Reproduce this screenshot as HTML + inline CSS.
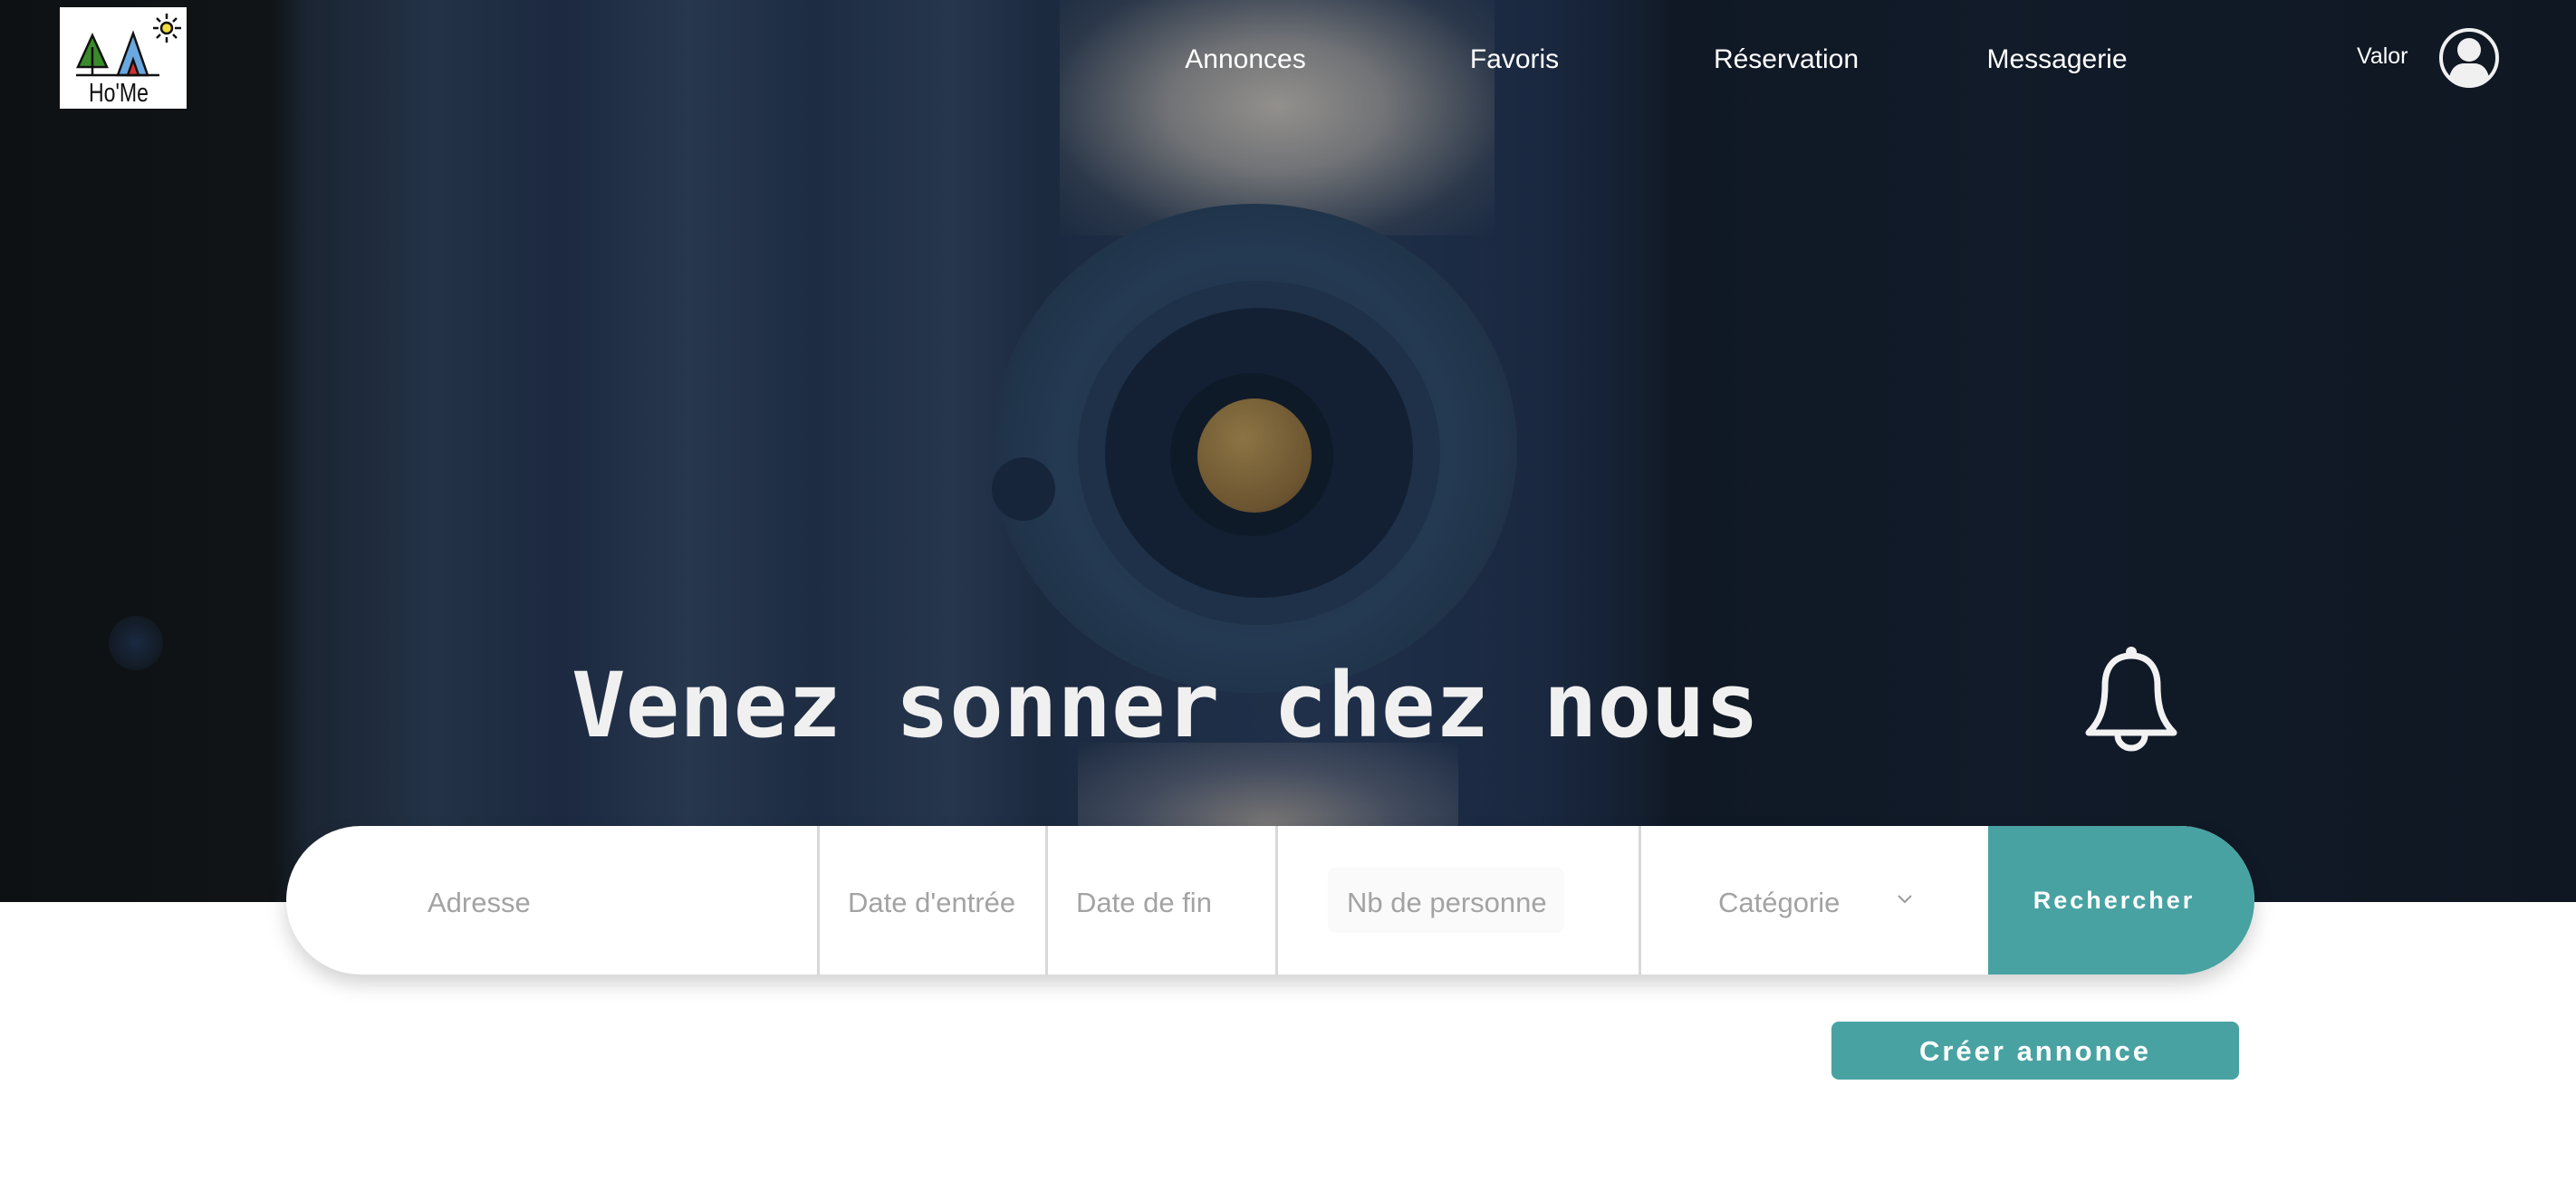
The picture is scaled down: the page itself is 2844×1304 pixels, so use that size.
<!DOCTYPE html>
<html><head><meta charset="utf-8">
<style>
*{margin:0;padding:0;box-sizing:border-box}
body{width:2844px;height:1304px;overflow:hidden;background:#fff;font-family:"Liberation Sans",sans-serif;position:relative}
.hero{position:absolute;left:0;top:0;width:2844px;height:996px;overflow:hidden;
background:linear-gradient(90deg,#0e1113 0,#101417 300px,#1b2533 340px,#233246 480px,#1c2940 620px,#27374e 760px,#1d2c42 900px,#26364d 1050px,#1c2a40 1150px,#20304a 1450px,#1a2840 1700px,#141f30 1810px,#0f1824 1850px,#111b29 2200px,#0f1722 2844px)}
.abs{position:absolute}
.nav{position:absolute;top:49px;color:#fff;font-size:30px;transform:translateX(-50%);white-space:nowrap}
.sep{position:absolute;top:0;width:3px;height:164px;background:#d8d8d8}
.ph{position:absolute;top:67px;font-size:31px;color:#a3a3a3;white-space:nowrap}
</style></head><body>
<div class="hero">
  <div class="abs" style="left:1170px;top:0;width:480px;height:260px;background:radial-gradient(ellipse at 50% 45%,#b9b0a3 0,#8d8a86 35%,#2f3b4c 75%,transparent 100%);opacity:.75"></div>
  <div class="abs" style="left:1190px;top:820px;width:420px;height:180px;background:radial-gradient(ellipse at 50% 50%,#8e8780 0,#4a5262 50%,transparent 100%);opacity:.8"></div>
  <div class="abs" style="left:1095px;top:225px;width:580px;height:540px;border-radius:50%;background:radial-gradient(circle,#1f2f42 0,#243a52 55%,#1a2a3e 90%,transparent 100%)"></div>
  <div class="abs" style="left:1190px;top:310px;width:400px;height:380px;border-radius:50%;background:#132033;border:30px solid #1e3148"></div>
  <div class="abs" style="left:1292px;top:412px;width:180px;height:180px;border-radius:50%;background:#0f1a28"></div>
  <div class="abs" style="left:1322px;top:440px;width:126px;height:126px;border-radius:50%;background:radial-gradient(circle at 40% 35%,#8c7444,#6b5430 70%,#4a3a22)"></div>
  <div class="abs" style="left:1095px;top:505px;width:70px;height:70px;border-radius:50%;background:#16253a"></div>
  <div class="abs" style="left:120px;top:680px;width:60px;height:60px;border-radius:50%;background:radial-gradient(circle,#1a2a42,transparent)"></div>
</div>

<!-- logo -->
<div class="abs" style="left:66px;top:8px;width:140px;height:112px;background:#fff">
<svg width="140" height="112" viewBox="0 0 140 112">
  <g stroke="#111" stroke-width="2.5">
    <polygon points="20,66 36,31 52,66" fill="#3a8a2a"/>
    <line x1="36" y1="44" x2="36" y2="75"/>
    <polygon points="64,75 81,29 97,75" fill="#6aa8e0"/>
    <polygon points="75,75 81,58 87,75" fill="#d43030"/>
    <line x1="18" y1="75" x2="110" y2="75"/>
    <g stroke-width="2.5"><line x1="118" y1="7" x2="118" y2="13"/><line x1="118" y1="33" x2="118" y2="39"/><line x1="103" y1="23" x2="109" y2="23"/><line x1="127" y1="23" x2="134" y2="23"/><line x1="107" y1="12" x2="111" y2="16"/><line x1="125" y1="30" x2="129" y2="34"/><line x1="107" y1="34" x2="111" y2="30"/><line x1="125" y1="16" x2="129" y2="12"/></g>
    <circle cx="118" cy="23" r="6" fill="#f2dc40"/>
  </g>
  <text x="65" y="104" text-anchor="middle" font-family="Liberation Sans Narrow,Liberation Sans,sans-serif" font-size="29" fill="#111" textLength="66" lengthAdjust="spacingAndGlyphs">Ho'Me</text>
</svg></div>

<div class="nav" style="left:1375px">Annonces</div>
<div class="nav" style="left:1672px">Favoris</div>
<div class="nav" style="left:1972px">Réservation</div>
<div class="nav" style="left:2271px">Messagerie</div>
<div class="abs" style="left:2602px;top:48px;color:#fff;font-size:25px">Valor</div>
<svg class="abs" style="left:2692px;top:30px" width="68" height="68" viewBox="0 0 68 68">
  <circle cx="34" cy="34" r="31" fill="none" stroke="#f0f0f0" stroke-width="4"/>
  <circle cx="34" cy="25" r="13" fill="#f0f0f0"/>
  <path d="M12,56 C14,44 22,40 28,40 L40,40 C46,40 54,44 56,56 A31,31 0 0 1 12,56Z" fill="#f0f0f0"/>
</svg>

<div class="abs" style="left:631px;top:730px;color:#f0f0f0;font-family:'DejaVu Sans Mono','Liberation Mono',monospace;font-weight:bold;font-size:99px;white-space:nowrap;line-height:1">Venez sonner chez nous</div>

<svg class="abs" style="left:2290px;top:705px" width="130" height="125" viewBox="0 0 130 125">
  <circle cx="63" cy="15" r="6" fill="#f2f2f2"/>
  <path d="M63,19 C44,19 34,32 34,52 C34,78 28,92 16,104 L110,104 C98,92 92,78 92,52 C92,32 82,19 63,19Z" fill="none" stroke="#f2f2f2" stroke-width="7" stroke-linejoin="round"/>
  <path d="M48,107 A15,14 0 0 0 78,107" fill="none" stroke="#f2f2f2" stroke-width="7"/>
</svg>

<!-- search bar -->
<div class="abs" style="left:316px;top:912px;width:2173px;height:164px;background:#fff;border-radius:82px;box-shadow:0 10px 22px rgba(0,0,0,.18);overflow:hidden">
  <div class="sep" style="left:586px"></div>
  <div class="sep" style="left:838px"></div>
  <div class="sep" style="left:1092px"></div>
  <div class="sep" style="left:1493px"></div>
  <div class="ph" style="left:156px">Adresse</div>
  <div class="ph" style="left:620px">Date d'entrée</div>
  <div class="ph" style="left:872px">Date de fin</div>
  <div class="abs" style="left:1150px;top:46px;width:261px;height:72px;background:#fafafa;border-radius:8px"></div>
  <div class="ph" style="left:1171px">Nb de personne</div>
  <div class="ph" style="left:1581px">Catégorie</div>
  <svg class="abs" style="left:1777px;top:74px" width="20" height="14" viewBox="0 0 20 14"><path d="M3,3 L10,10 L17,3" fill="none" stroke="#999" stroke-width="2"/></svg>
  <div class="abs" style="left:1879px;top:0;width:294px;height:164px;background:#49a2a2;color:#fff;font-weight:bold;font-size:27px;letter-spacing:3px;text-align:center;line-height:164px;padding-right:16px">Rechercher</div>
</div>

<div class="abs" style="left:2022px;top:1128px;width:450px;height:64px;background:#49a2a2;border-radius:8px;color:#fff;font-weight:bold;font-size:31px;letter-spacing:3px;text-align:center;line-height:66px">Créer annonce</div>
</body></html>
